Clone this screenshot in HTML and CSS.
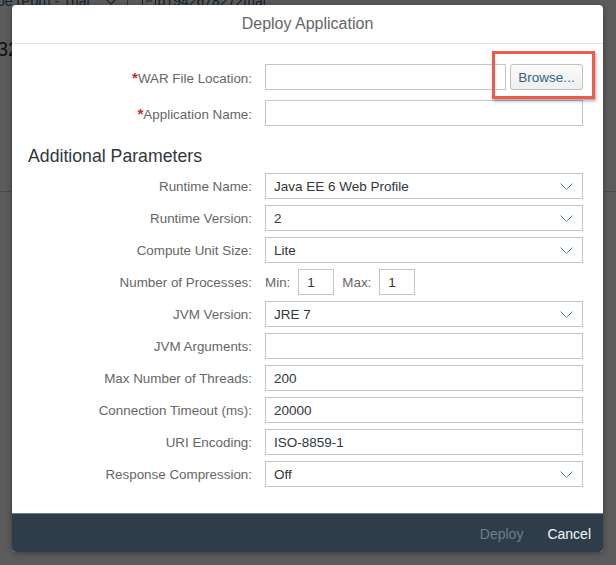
FILE: index.html
```html
<!DOCTYPE html>
<html>
<head>
<meta charset="utf-8">
<title>Deploy Application</title>
<link rel="stylesheet" href="styles.css">
</head>
<body>
<div class="page">
  <div class="page-top">
    <div class="shellbar">
      <span class="crumb crumb-first">be (Pon) - Trial</span>
      <svg class="crumb-chev" width="14" height="8" viewBox="0 0 14 8"><polyline points="0.5,0.5 7,7 13.5,0.5" fill="none" stroke="#346187" stroke-width="1.2"/></svg>
      <span class="crumb-sep"></span>
      <svg class="crumb-icon" width="14" height="12" viewBox="0 0 14 12"><rect x="0.5" y="0.5" width="13" height="11" fill="none" stroke="#346187"/><line x1="4" y1="6" x2="10" y2="6" stroke="#346187"/></svg>
      <span class="crumb">p1942678272trial</span>
    </div>
    <div class="page-title">32</div>
  </div>
</div>

<div class="overlay"></div>

<div class="dialog">
  <header class="dlg-header">Deploy Application</header>
  <div class="dlg-body">
    <div class="form form-main">
      <label class="lbl"><span class="req">*</span>WAR File Location:</label>
      <div class="field-file">
        <span class="input input-file"></span>
        <button class="btn-browse">Browse...</button>
      </div>
      <label class="lbl"><span class="req">*</span>Application Name:</label>
      <span class="input"></span>
    </div>

    <h2 class="section-title">Additional Parameters</h2>

    <div class="form form-params">
      <label class="lbl">Runtime Name:</label>
      <div class="input select">Java EE 6 Web Profile<svg class="chev" width="13" height="7" viewBox="0 0 13 7"><polyline points="0.5,0.5 6.5,6.5 12.5,0.5" fill="none" stroke="#5b7fa6" stroke-width="1"/></svg></div>

      <label class="lbl">Runtime Version:</label>
      <div class="input select">2<svg class="chev" width="13" height="7" viewBox="0 0 13 7"><polyline points="0.5,0.5 6.5,6.5 12.5,0.5" fill="none" stroke="#5b7fa6" stroke-width="1"/></svg></div>

      <label class="lbl">Compute Unit Size:</label>
      <div class="input select">Lite<svg class="chev" width="13" height="7" viewBox="0 0 13 7"><polyline points="0.5,0.5 6.5,6.5 12.5,0.5" fill="none" stroke="#5b7fa6" stroke-width="1"/></svg></div>

      <label class="lbl">Number of Processes:</label>
      <div class="minmax">
        <span class="sub-lbl">Min:</span>
        <span class="input input-small">1</span>
        <span class="sub-lbl">Max:</span>
        <span class="input input-small">1</span>
      </div>

      <label class="lbl">JVM Version:</label>
      <div class="input select">JRE 7<svg class="chev" width="13" height="7" viewBox="0 0 13 7"><polyline points="0.5,0.5 6.5,6.5 12.5,0.5" fill="none" stroke="#5b7fa6" stroke-width="1"/></svg></div>

      <label class="lbl">JVM Arguments:</label>
      <span class="input"></span>

      <label class="lbl">Max Number of Threads:</label>
      <span class="input">200</span>

      <label class="lbl">Connection Timeout (ms):</label>
      <span class="input">20000</span>

      <label class="lbl">URI Encoding:</label>
      <span class="input">ISO-8859-1</span>

      <label class="lbl">Response Compression:</label>
      <div class="input select">Off<svg class="chev" width="13" height="7" viewBox="0 0 13 7"><polyline points="0.5,0.5 6.5,6.5 12.5,0.5" fill="none" stroke="#5b7fa6" stroke-width="1"/></svg></div>
    </div>
  </div>
  <footer class="dlg-footer">
    <button class="fbtn fbtn-disabled">Deploy</button>
    <button class="fbtn">Cancel</button>
  </footer>
  <div class="highlight"></div>
</div>
</body>
</html>
```

FILE: styles.css
```css
html, body {
  margin: 0;
  padding: 0;
}
body {
  width: 616px;
  height: 565px;
  overflow: hidden;
  background: #ffffff;
  font-family: "Liberation Sans", Arial, sans-serif;
  position: relative;
}

/* background page (dimmed) */
.page-top {
  margin-top: -9px;
  height: 201px;
  border-bottom: 1px solid #d6d6d6;
  box-sizing: border-box;
}
.shellbar {
  height: 20px;
  line-height: 20px;
  display: flex;
  align-items: center;
  font-size: 14px;
  color: #346187;
  white-space: nowrap;
}
.crumb-first {
  margin-left: -3px;
}
.crumb-chev {
  margin-left: 14px;
}
.crumb-sep {
  width: 1px;
  height: 16px;
  background: #8c8c8c;
  margin-left: 9px;
}
.crumb-icon {
  margin-left: 14px;
  margin-right: 2px;
}
.page-title {
  margin-top: 26px;
  font-size: 20px;
  line-height: 24px;
  color: #32363a;
  text-indent: -3px;
}

.overlay {
  position: absolute;
  inset: 0;
  background: rgba(0, 0, 0, 0.64);
}

/* dialog */
.dialog {
  position: absolute;
  left: 12px;
  top: 5px;
  width: 591px;
  height: 547px;
  background: #ffffff;
  border-radius: 4px;
  box-shadow: 0 1px 6px rgba(0, 0, 0, 0.35);
  display: flex;
  flex-direction: column;
}
.dlg-header {
  height: 39px;
  line-height: 38px;
  box-sizing: border-box;
  border-bottom: 1px solid #e5e5e5;
  text-align: center;
  font-size: 16px;
  color: #666666;
}
.dlg-body {
  flex: 1;
  padding: 20px 20px 0 16px;
}
.form {
  display: grid;
  grid-template-columns: 224px 318px;
  column-gap: 13px;
  grid-auto-rows: 26px;
}
.form-main {
  row-gap: 10px;
}
.form-params {
  row-gap: 6px;
}
.lbl {
  align-self: center;
  text-align: right;
  font-size: 13.4px;
  color: #666666;
  white-space: nowrap;
}
.req {
  color: #d9252c;
  font-weight: bold;
  font-size: 15px;
}
.input {
  height: 26px;
  box-sizing: border-box;
  border: 1px solid #c4c4c4;
  background: #ffffff;
  padding: 0 9px 0 8px;
  display: flex;
  align-items: center;
  font-size: 13.5px;
  color: #32363a;
}
.select {
  justify-content: space-between;
}
.chev {
  margin-right: 0;
}
.field-file {
  display: flex;
  gap: 4px;
}
.input-file {
  width: 241px;
}
.btn-browse {
  flex: 1;
  height: 26px;
  box-sizing: border-box;
  border: 1px solid #bfbfbf;
  border-radius: 3px;
  background: linear-gradient(#fafafa, #efefef);
  font-family: "Liberation Sans", Arial, sans-serif;
  font-size: 13.5px;
  color: #346187;
  padding: 0;
}
.section-title {
  margin: 19px 0 6px 0;
  font-size: 17.7px;
  line-height: 22px;
  font-weight: normal;
  color: #32363a;
}
.minmax {
  display: flex;
  align-items: center;
  gap: 8px;
}
.sub-lbl {
  font-size: 13.4px;
  color: #666666;
}
.input-small {
  width: 36px;
}

.dlg-footer {
  height: 39px;
  box-sizing: border-box;
  border-top: 1px solid #6f7d89;
  background: #2f3d4a;
  border-radius: 0 0 4px 4px;
  display: flex;
  justify-content: flex-end;
  align-items: center;
  gap: 24px;
  padding: 1px 12px 0 0;
}
.fbtn {
  border: none;
  background: transparent;
  padding: 0;
  font-family: "Liberation Sans", Arial, sans-serif;
  font-size: 14px;
  color: #f4f7fa;
}
.fbtn-disabled {
  color: #6f7e8c;
}

.highlight {
  position: absolute;
  left: 480px;
  top: 46px;
  width: 103px;
  height: 48px;
  box-sizing: border-box;
  border: 3px solid #ef5a4d;
  box-shadow: 1px 2px 3px rgba(0, 0, 0, 0.35);
}
```
